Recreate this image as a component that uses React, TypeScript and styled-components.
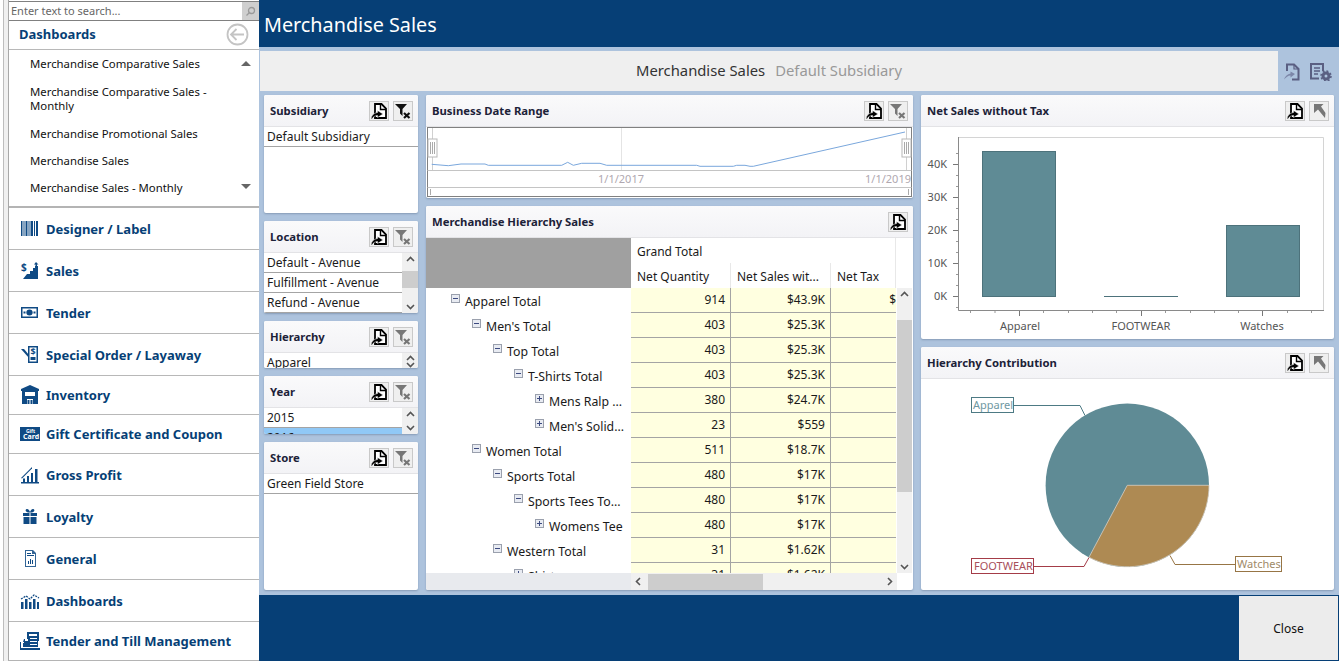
import React from "react";
import styled, { createGlobalStyle } from "styled-components";

const FONT = `"Noto Sans", "DejaVu Sans", sans-serif`;
const NAVY = "#063f76";

const Global = createGlobalStyle`
  html, body { margin: 0; padding: 0; background: #fff; overflow: hidden; }
  body { font-family: ${FONT}; font-size: 12px; color: #1a1a1a; }
  * { box-sizing: border-box; }
`;

const Page = styled.div`display: flex; width: 1339px; height: 661px;`;
const EdgeStrip = styled.div`width: 8px; flex: none; background: linear-gradient(to right, #fff 3px, #bdbdbd 3px, #bdbdbd 4px, #f0f0f0 4px);`;
const Sidebar = styled.aside`width: 251px; flex: none; display: flex; flex-direction: column; background: #fff; border-left: 1px solid #a8a8a8; border-bottom: 1px solid #b4b4b4;`;
const SearchBox = styled.div`display: flex; height: 20px; margin-top: 1px; border-top: 1px solid #808080; border-bottom: 1px solid #808080; align-items: stretch;`;
const SearchText = styled.div`flex: 1; padding-left: 2px; line-height: 17px; font-size: 11px; color: #666;`;
const SearchBtn = styled.div`width: 17px; background: #cfcfcf; display: flex; align-items: center; justify-content: center;`;
const SideHead = styled.div`height: 29px; display: flex; align-items: center; justify-content: space-between; padding: 0 10px 2px 10px; border-bottom: 1px solid #b8b8b8; font-weight: 700; font-size: 13px; color: ${NAVY};`;
const SubList = styled.div`height: 158px; position: relative; border-bottom: 2px solid #b4b4b4; flex: none;`;
const SubItem = styled.div<{ $h: number }>`height: ${(p) => p.$h}px; display: flex; align-items: center; padding: 1px 0 0 21px; width: 222px; line-height: 14px; font-size: 11.35px; color: #111;`;
const ListArrow = styled.div<{ $up?: boolean }>`position: absolute; right: 8px; width: 0; height: 0; border-left: 5px solid transparent; border-right: 5px solid transparent;
  ${(p) => (p.$up ? "top: 11px; border-bottom: 5px solid #666;" : "bottom: 17px; border-top: 5px solid #666;")}`;
const NavRow = styled.div<{ $h: number }>`height: ${(p) => p.$h}px; flex: none; display: flex; align-items: center; gap: 6px; padding-left: 11px; border-bottom: 1px solid #b8b8b8; font-weight: 700; font-size: 13px; color: ${NAVY}; &:last-child { border-bottom: 0; }`;
const NavIcon = styled.svg`width: 20px; height: 20px; flex: none; fill: #0f4a84;`;

const Main = styled.main`flex: 1; display: flex; flex-direction: column; background: #adc3dd; min-width: 0;`;
const TitleBar = styled.header`height: 47px; flex: none; background: ${NAVY}; color: #fff; font-size: 19.8px; padding-left: 5px; line-height: 49px;`;
const StripRow = styled.div`display: flex; margin: 4px 0 4px 1px; height: 40px; flex: none;`;
const Strip = styled.div`width: 1018px; background: #efefef; display: flex; justify-content: center; align-items: center; gap: 10px; padding-bottom: 2px; font-size: 14.8px; color: #333;`;
const StripSub = styled.span`color: #999;`;
const StripIcons = styled.div`display: flex; align-items: center; gap: 10px; padding: 2px 0 0 6px;`;
const Board = styled.div`flex: 1; display: grid; grid-template-columns: 154px 487px 413px; gap: 8px; padding: 0 5px 5px 5px; min-height: 0;`;
const Column = styled.div`display: flex; flex-direction: column; gap: 8px; min-height: 0;`;
const Panel = styled.section<{ $h?: number }>`background: #fff; border-radius: 2px; box-shadow: 0 1px 2px rgba(60,80,110,.35); display: flex; flex-direction: column; overflow: hidden;
  ${(p) => (p.$h ? `height: ${p.$h}px; flex: none;` : "flex: 1; min-height: 0;")}`;
const PanelHead = styled.div`height: 32px; flex: none; display: flex; align-items: center; justify-content: space-between; padding: 0 5px 0 6px; background: linear-gradient(#fafafb, #f3f3f6); border-bottom: 1px solid #e3e3e6; font-weight: 700; font-size: 11.3px; color: #1c2238;`;
const Tools = styled.div`display: flex; gap: 4px;`;
const ToolBtn = styled.div`width: 20px; height: 20px; background: #efefef; border: 1px solid #c9c9c9; display: flex; align-items: center; justify-content: center;`;
const ListBody = styled.div`flex: 1; display: flex; min-height: 0; overflow: hidden;`;
const ListRows = styled.div`flex: 1; min-width: 0; overflow: hidden;`;
const ListRow = styled.div<{ $sel?: boolean }>`height: 20px; line-height: 19px; padding-left: 3px; border-bottom: 1px solid #a4a4a4; font-size: 12px; white-space: nowrap; background: ${(p) => (p.$sel ? "#90c8f6" : "#fff")};`;
const VScroll = styled.div<{ $tight?: boolean }>`width: 16px; flex: none; background: #f0f0f0; display: flex; flex-direction: column; align-items: center; justify-content: space-between; position: relative; padding: ${(p) => (p.$tight ? "2px 0 0" : "3px 0")};`;
const Thumb = styled.div<{ $top: number; $h: number }>`position: absolute; left: 0; right: 0; top: ${(p) => p.$top}px; height: ${(p) => p.$h}px; background: #cdcdcd;`;
const Chevron = styled.svg`width: 9px; height: 6px; flex: none; stroke: #555; fill: none; stroke-width: 1.6;`;

const RangeBody = styled.div`flex: 1; padding: 0 1px 1px 1px; min-height: 0;`;
const DrawSvg = styled.svg`display: block;`;

const PivotHead = styled.div`display: grid; grid-template-columns: 205px 100px 100px 65px 1fr; grid-template-rows: 25px 25px; flex: none;`;
const PivotCorner = styled.div`grid-row: 1 / 3; background: #a0a0a0;`;
const PivotGrand = styled.div`grid-column: 2 / 5; padding-left: 6px; line-height: 28px; border-right: 1px solid #e8e8e8; font-size: 12px;`;
const PivotBlank = styled.div``;
const PivotCol = styled.div`padding-left: 6px; line-height: 28px; border-right: 1px solid #e8e8e8; font-size: 12px; white-space: nowrap;`;
const PivotMid = styled.div`flex: 1; display: flex; min-height: 0;`;
const PivotRows = styled.div`width: 470px; flex: none; overflow: hidden;`;
const PivotRow = styled.div`display: grid; grid-template-columns: 205px 100px 100px 65px; height: 25px;`;
const TreeCell = styled.div<{ $level: number }>`display: flex; align-items: center; padding: 2px 0 0 ${(p) => 25 + p.$level * 21}px; gap: 5px; white-space: nowrap; font-size: 12.3px; overflow: hidden;`;
const Expander = styled.span`width: 9px; height: 9px; flex: none; border: 1px solid #9aa0ad; background: #e8ebf2; position: relative; margin-top: -7px;
  &::before { content: ""; position: absolute; left: 1px; right: 1px; top: 3px; height: 1px; background: #3c4a80; }`;
const ExpanderPlus = styled(Expander)`&::after { content: ""; position: absolute; top: 1px; bottom: 1px; left: 3px; width: 1px; background: #3c4a80; }`;
const DataCell = styled.div`background: #ffffe0; border-bottom: 1px solid #a4a4a4; border-right: 1px solid #a4a4a4; text-align: right; padding-right: 5px; line-height: 24px; font-size: 12px; white-space: nowrap; overflow: hidden;`;
const TaxCell = styled(DataCell)`border-right: 0; padding-right: 0;`;
const PivotV = styled(VScroll)`width: 15px; margin-right: 2px; margin-left: 1px;`;
const PivotBottom = styled.div`height: 17px; flex: none; display: flex;`;
const BottomLeft = styled.div`width: 205px; background: #e8eaee;`;
const HScroll = styled.div`width: 266px; background: #f0f0f0; position: relative; display: flex; align-items: center; justify-content: space-between; padding: 0 4px;`;
const HThumb = styled.div`position: absolute; left: 17px; width: 115px; top: 1px; bottom: 0; background: #cdcdcd;`;
const BottomRest = styled.div`flex: 1;`;

const Footer = styled.footer`height: 66px; flex: none; background: ${NAVY}; display: flex; justify-content: flex-end; padding: 1px 1px 1px 0;`;
const CloseBtn = styled.button`width: 99px; height: 64px; border: 0; background: #ececec; font-family: ${FONT}; font-size: 12px; color: #111; padding: 0;`;

const ExportIcon = () => (
  <svg width="16" height="16" viewBox="0 0 16 16">
    <path d="M4 1h6.500L15 5.500V15H4z" fill="#fff" stroke="#000" strokeWidth="1.800" />
    <path d="M9.500 1v5.500H15" fill="none" stroke="#000" strokeWidth="1.400" />
    <path d="M0 16c.5-3.500 2.500-6 6.500-6.500V7.500L12 11l-5.500 3.500v-2C4 12.500 2 14 1 16z" fill="#000" stroke="#fff" strokeWidth=".5" />
  </svg>
);
const ClearIcon = ({ on }: { on?: boolean }) => {
  const c = on ? "#111" : "#777";
  return (
    <svg width="16" height="16" viewBox="0 0 16 16">
      <path d="M0 1h12L7.500 6v7L5 10.500V6z" fill={c} />
      <path d="M9 10l5.500 5M14.500 10L9 15" stroke={c} strokeWidth="2.200" />
    </svg>
  );
};
const DrillIcon = () => (
  <svg width="16" height="16" viewBox="0 0 16 16">
    <path d="M3 1h9.500L10 3.500 14.500 10 14 15 7 6.500 3 10z" fill="#777" />
  </svg>
);
const Tool = ({ kind }: { kind: "export" | "clearOn" | "clear" | "drill" }) => (
  <ToolBtn>
    {kind === "export" && <ExportIcon />}
    {kind === "clearOn" && <ClearIcon on />}
    {kind === "clear" && <ClearIcon />}
    {kind === "drill" && <DrillIcon />}
  </ToolBtn>
);
const Up = () => <Chevron viewBox="0 0 9 6"><path d="M1 5l3.500-3.500L8 5" /></Chevron>;
const Down = () => <Chevron viewBox="0 0 9 6"><path d="M1 1l3.500 3.500L8 1" /></Chevron>;
const SideChevron = ({ left }: { left?: boolean }) => (
  <svg width="6" height="9" viewBox="0 0 6 9" fill="none" stroke="#555" strokeWidth="1.600">
    <path d={left ? "M5 1L1.500 4.500 5 8" : "M1 1l3.500 3.500L1 8"} />
  </svg>
);

const navIcons: Record<string, React.ReactNode> = {
  barcode: <path d="M1 2h1.500v15H1zM3.500 2h1v15h-1zM5.500 2h2v15h-2zM8.500 2h1v15h-1zM10.500 2h2.500v15h-2.500zM14 2h1v15h-1zM16 2h2v15h-2z" />,
  sales: <><path d="M3 18l4-5h3v-3h3V7h2V5h3v13z" /><path d="M14 3.500L16 1l2.500 2.500H17V5h-1.500V3.500z" /><text x="1" y="10" fontSize="10" fontWeight="700" fontFamily="Noto Sans">$</text></>,
  tender: <path fillRule="evenodd" d="M1 4h17v11H1zM2.500 5.500v8h14v-8zM9.500 6.500c2 0 3.200 1.300 3.200 3s-1.200 3-3.200 3-3.200-1.300-3.200-3 1.200-3 3.200-3zM3.500 8.500h2v2h-2zM13.500 8.500h2v2h-2z" />,
  special: <><path d="M1 4h3l5 6v3z" /><path fillRule="evenodd" d="M8 1h10v17H8zM9.500 2.500v14h7v-14z" /><text x="10.500" y="10" fontSize="9" fontWeight="700" fontFamily="Noto Sans">$</text><path d="M10.500 12h5v3h-5z" /></>,
  inventory: <path fillRule="evenodd" d="M10 0l9 4v2h-1v13h-5v-5H7v5H2V6H1V4zM5 7v4h10V7zM7.500 15h2v4h-2zM10.500 15h2v4h-2z" />,
  gift: <><rect x="0" y="3" width="20" height="14" /><text x="6" y="9" fontSize="5" fill="#fff" fontFamily="Noto Sans">Gift</text><text x="3" y="15" fontSize="7" fill="#fff" fontFamily="Noto Sans">Card</text></>,
  profit: <><path d="M1 17h18v1.500H1zM3 13.500h2V17H3zM7 11h2v6H7zM11 8h2v9h-2zM15 4h2.500v13H15z" /><path d="M1 13L11 3l1-1v1.500L2 13.500z" /></>,
  loyalty: <path fillRule="evenodd" d="M3 6h6.500v3H3zM10.500 6H17v3h-6.500zM3.500 10h6v7h-6zM10.500 10h6v7h-6zM7 2c1.500 0 2.500 1.500 3 3 .5-1.500 1.500-3 3-3s2.500 2.500-1 3.500H8C4.500 4.500 5.500 2 7 2z" />,
  general: <><path fillRule="evenodd" d="M5 1h8l3 3v14H5zM6 2v15h9V5h-3V2z" fillOpacity=".85" /><path d="M7 4h4v1H7zM7 6h7v1H7zM8 15v-3h1v3zM10 15v-5h1v5zM12 15v-4h1v4z" /></>,
  dash: <><path d="M1 11h2.500v7H1zM5 8h2.500v10H5zM9 11h2.500v7H9zM13 8h2.500v10H13zM17 11h2v7h-2z" /><path d="M1 8l5-3 4 3 4-4 5 3" fill="none" stroke="#0f4a84" strokeWidth="1.300" strokeDasharray="2 1" /></>,
  till: <path fillRule="evenodd" d="M7 1h12v9h-1v6H3v-4h1v-1H1v6h19v2H0v-8h3l1-3h3zM9 3v2h8V3zM5 8h3v2H5zM10 7h7v1h-7zM10 10h7v1h-7zM10 13h7v1h-7z" />,
};

const navRows: [string, string, number][] = [
  ["barcode", "Designer / Label", 42],
  ["sales", "Sales", 42],
  ["tender", "Tender", 42],
  ["special", "Special Order / Layaway", 42],
  ["inventory", "Inventory", 39],
  ["gift", "Gift Certificate and Coupon", 39],
  ["profit", "Gross Profit", 42],
  ["loyalty", "Loyalty", 42],
  ["general", "General", 42],
  ["dash", "Dashboards", 42],
  ["till", "Tender and Till Management", 38],
];

const pivotData: [number, boolean, string, string, string, string][] = [
  [0, false, "Apparel Total", "914", "$43.9K", "$"],
  [1, false, "Men's Total", "403", "$25.3K", ""],
  [2, false, "Top Total", "403", "$25.3K", ""],
  [3, false, "T-Shirts Total", "403", "$25.3K", ""],
  [4, true, "Mens Ralp ...", "380", "$24.7K", ""],
  [4, true, "Men's Solid...", "23", "$559", ""],
  [1, false, "Women Total", "511", "$18.7K", ""],
  [2, false, "Sports Total", "480", "$17K", ""],
  [3, false, "Sports Tees To...", "480", "$17K", ""],
  [4, true, "Womens Tee", "480", "$17K", ""],
  [2, false, "Western Total", "31", "$1.62K", ""],
  [3, true, "Shirts", "31", "$1.62K", ""],
];

const rangePoints = [[20,223],[70,227],[108,222],[180,222],[190,226],[410,226],[428,217],[445,226],[470,220],[525,220],[545,226],[815,226],[825,229],[925,229],[935,226],[960,226],[975,229],[985,229],[1440,126]]
  .map(([x, y]) => `${(x / 3 - 2).toFixed(1)},${(y / 3 - 37).toFixed(1)}`).join(" ");

const RangeChart = () => (
  <DrawSvg width="485" height="70" viewBox="0 0 485 70">
    <rect x=".5" y=".5" width="484" height="69" fill="#fff" stroke="#808080" />
    <path d="M.5 43.500h484M.5 60.500h484" stroke="#c4c4c4" />
    <path d="M194.500 1v42" stroke="#e4e4e4" />
    <path d="M5.500 1v42M479.500 1v42" stroke="#d0d0d0" />
    <polyline points={rangePoints} fill="none" stroke="#7aa7dc" strokeWidth="1" />
    <rect x="1" y="12" width="9" height="18" fill="#fff" stroke="#b8b8b8" />
    <rect x="475" y="12" width="9" height="18" fill="#fff" stroke="#b8b8b8" />
    <path d="M3.500 15v12M5.500 15v12M7.500 15v12M477.500 15v12M479.500 15v12M481.500 15v12" stroke="#aaa" />
    <path d="M3.500 62v6M481.500 62v6" stroke="#aaa" />
    <text x="194" y="56" textAnchor="middle" fontSize="11" fill="#b0a8b0" fontFamily="Noto Sans">1/1/2017</text>
    <text x="484" y="56" textAnchor="end" fontSize="11" fill="#b0a8b0" fontFamily="Noto Sans">1/1/2019</text>
  </DrawSvg>
);

const BarChart = () => {
  const minor: number[] = [];
  for (let y = 153; y < 310; y += 11) minor.push(y);
  const xs = [970, 994.5, 1043, 1068, 1092, 1116, 1165, 1190, 1214, 1238, 1287, 1311];
  const ox = 921, oy = 127;
  return (
    <DrawSvg width="413" height="212" viewBox={`${ox} ${oy} 413 212`}>
      <path d="M958.500 137.500H1323.500V310" fill="none" stroke="#d4d4d4" />
      <path d="M958.500 137v173.500H1324" fill="none" stroke="#8a8a8a" />
      {minor.map((y) => <path key={y} d={`M956 ${y + 0.5}h2`} stroke="#999" />)}
      {[164, 197, 230, 263, 296].map((y, i) => (
        <g key={y}>
          <path d={`M953 ${y + 0.5}h5`} stroke="#777" />
          <text x="947" y={y + 4} textAnchor="end" fontSize="11" fill="#555" fontFamily="Noto Sans">{`${40 - i * 10}K`}</text>
        </g>
      ))}
      {xs.map((x) => <path key={x} d={`M${x + 0.5} 311v2`} stroke="#999" />)}
      {[1019, 1141, 1262].map((x) => <path key={x} d={`M${x + 0.5} 311v5`} stroke="#777" />)}
      <rect x="982.500" y="151.500" width="73" height="145" fill="#5f8b95" stroke="#4d727b" />
      <rect x="1104" y="296" width="74" height="1" fill="#4d727b" />
      <rect x="1226.500" y="225.500" width="73" height="71" fill="#5f8b95" stroke="#4d727b" />
      <g fontSize="11" fill="#555" textAnchor="middle" fontFamily="Noto Sans">
        <text x="1020" y="330">Apparel</text>
        <text x="1141" y="330">FOOTWEAR</text>
        <text x="1262" y="330">Watches</text>
      </g>
    </DrawSvg>
  );
};

const PieChart = () => {
  const ox = 921, oy = 379;
  return (
    <DrawSvg width="413" height="211" viewBox={`${ox} ${oy} 413 211`}>
      <circle cx="1127.300" cy="485.300" r="81.700" fill="#5f8b95" />
      <path d="M1127.300 485.300H1209A81.700 81.700 0 0 1 1089 557.200Z" fill="#ae8a53" stroke="#d8cfc4" strokeWidth=".8" />
      <path d="M1014 405.500h66l5 10" fill="none" stroke="#4d7a84" />
      <path d="M1033 566.500h51l5-9" fill="none" stroke="#a43c48" />
      <path d="M1235 564.500h-60l-5-9" fill="none" stroke="#977545" />
      <rect x="971.500" y="397.500" width="42" height="15" fill="#fff" stroke="#4d7a84" />
      <rect x="971.500" y="558.500" width="62" height="15" fill="#fff" stroke="#a43c48" />
      <rect x="1235.500" y="556.500" width="46" height="15" fill="#fff" stroke="#977545" />
      <g fontSize="11" fontFamily="Noto Sans">
        <text x="973" y="409" fill="#6f98a2">Apparel</text>
        <text x="974" y="570" fill="#a8505c">FOOTWEAR</text>
        <text x="1237" y="568" fill="#a08a68">Watches</text>
      </g>
    </DrawSvg>
  );
};

const PanelTitle = ({ title, tools }: { title: string; tools: ("export" | "clearOn" | "clear" | "drill")[] }) => (
  <PanelHead>
    <span>{title}</span>
    <Tools>{tools.map((t) => <Tool key={t} kind={t} />)}</Tools>
  </PanelHead>
);

export default function App() {
  return (
    <>
      <Global />
      <Page>
        <EdgeStrip />
        <Sidebar>
          <SearchBox>
            <SearchText>Enter text to search...</SearchText>
            <SearchBtn>
              <svg width="11" height="11" viewBox="0 0 11 11" fill="none" stroke="#9a9a9a" strokeWidth="1.300">
                <circle cx="6.500" cy="4.500" r="3" /><path d="M4.500 6.500L1.500 9.500" />
              </svg>
            </SearchBtn>
          </SearchBox>
          <SideHead>
            <span>Dashboards</span>
            <svg width="23" height="23" viewBox="0 0 23 23" fill="none" stroke="#c4c4c4" strokeWidth="1.800">
              <circle cx="11.500" cy="11.500" r="10" /><path d="M18 11.500H5.500M10.500 6l-5.500 5.500 5.500 5.500" />
            </svg>
          </SideHead>
          <SubList>
            <SubItem $h={27}>Merchandise Comparative Sales</SubItem>
            <SubItem $h={43}>Merchandise Comparative Sales - Monthly</SubItem>
            <SubItem $h={27}>Merchandise Promotional Sales</SubItem>
            <SubItem $h={27}>Merchandise Sales</SubItem>
            <SubItem $h={27}>Merchandise Sales - Monthly</SubItem>
            <ListArrow $up />
            <ListArrow />
          </SubList>
          {navRows.map(([icon, label, h]) => (
            <NavRow key={label} $h={h}>
              <NavIcon viewBox="0 0 20 20">{navIcons[icon]}</NavIcon>
              <span>{label}</span>
            </NavRow>
          ))}
        </Sidebar>
        <Main>
          <TitleBar>Merchandise Sales</TitleBar>
          <StripRow>
            <Strip>
              <span>Merchandise Sales</span>
              <StripSub>Default Subsidiary</StripSub>
            </Strip>
            <StripIcons>
              <svg width="16" height="18" viewBox="0 0 16 18">
                <path d="M3 8V1.500h7l4.500 4.500v10.500H8" fill="none" stroke="#5a5f82" strokeWidth="2" />
                <path d="M10 1v5h5" fill="none" stroke="#5a5f82" strokeWidth="1.200" />
                <path d="M0 16.500c1-3.500 3.500-5.500 6.500-6V8.500L11 11l-4.500 3.500V12.500c-2.500 0-4.500 2-6.500 4z" fill="#7c86a8" />
              </svg>
              <svg width="22" height="18" viewBox="0 0 22 18">
                <path d="M9 15.500H1V1h12v7" fill="none" stroke="#5a5f82" strokeWidth="2" />
                <path d="M4 5h6M4 8h6M4 11h4" stroke="#5a5f82" strokeWidth="1.300" />
                <circle cx="16" cy="13" r="3" fill="none" stroke="#5a5f82" strokeWidth="3" />
                <circle cx="16" cy="13" r="5" fill="none" stroke="#5a5f82" strokeWidth="1.500" strokeDasharray="2 1.900" />
              </svg>
            </StripIcons>
          </StripRow>
          <Board>
            <Column>
              <Panel $h={118}>
                <PanelTitle title="Subsidiary" tools={["export", "clearOn"]} />
                <ListBody><ListRows><ListRow>Default Subsidiary</ListRow></ListRows></ListBody>
              </Panel>
              <Panel $h={92}>
                <PanelTitle title="Location" tools={["export", "clear"]} />
                <ListBody>
                  <ListRows>
                    <ListRow>Default - Avenue</ListRow>
                    <ListRow>Fulfillment - Avenue</ListRow>
                    <ListRow>Refund - Avenue</ListRow>
                  </ListRows>
                  <VScroll><Up /><Thumb $top={18} $h={17} /><Down /></VScroll>
                </ListBody>
              </Panel>
              <Panel $h={47}>
                <PanelTitle title="Hierarchy" tools={["export", "clear"]} />
                <ListBody>
                  <ListRows><ListRow>Apparel</ListRow></ListRows>
                  <VScroll $tight><Up /><Down /></VScroll>
                </ListBody>
              </Panel>
              <Panel $h={58}>
                <PanelTitle title="Year" tools={["export", "clear"]} />
                <ListBody>
                  <ListRows>
                    <ListRow>2015</ListRow>
                    <ListRow $sel>2016</ListRow>
                  </ListRows>
                  <VScroll><Up /><Down /></VScroll>
                </ListBody>
              </Panel>
              <Panel>
                <PanelTitle title="Store" tools={["export", "clear"]} />
                <ListBody><ListRows><ListRow>Green Field Store</ListRow></ListRows></ListBody>
              </Panel>
            </Column>
            <Column>
              <Panel $h={103}>
                <PanelTitle title="Business Date Range" tools={["export", "clear"]} />
                <RangeBody><RangeChart /></RangeBody>
              </Panel>
              <Panel>
                <PanelTitle title="Merchandise Hierarchy Sales" tools={["export"]} />
                <PivotHead>
                  <PivotCorner />
                  <PivotGrand>Grand Total</PivotGrand>
                  <PivotBlank />
                  <PivotCol>Net Quantity</PivotCol>
                  <PivotCol>Net Sales wit...</PivotCol>
                  <PivotCol>Net Tax</PivotCol>
                  <PivotBlank />
                </PivotHead>
                <PivotMid>
                  <PivotRows>
                    {pivotData.map(([level, plus, name, q, s, t]) => (
                      <PivotRow key={name}>
                        <TreeCell $level={level}>
                          {plus ? <ExpanderPlus /> : <Expander />}
                          <span>{name}</span>
                        </TreeCell>
                        <DataCell>{q}</DataCell>
                        <DataCell>{s}</DataCell>
                        <TaxCell>{t}</TaxCell>
                      </PivotRow>
                    ))}
                  </PivotRows>
                  <PivotV><Up /><Thumb $top={32} $h={172} /><Down /></PivotV>
                </PivotMid>
                <PivotBottom>
                  <BottomLeft />
                  <HScroll><HThumb /><SideChevron left /><SideChevron /></HScroll>
                  <BottomRest />
                </PivotBottom>
              </Panel>
            </Column>
            <Column>
              <Panel $h={244}>
                <PanelTitle title="Net Sales without Tax" tools={["export", "drill"]} />
                <BarChart />
              </Panel>
              <Panel>
                <PanelTitle title="Hierarchy Contribution" tools={["export", "drill"]} />
                <PieChart />
              </Panel>
            </Column>
          </Board>
          <Footer><CloseBtn>Close</CloseBtn></Footer>
        </Main>
      </Page>
    </>
  );
}
